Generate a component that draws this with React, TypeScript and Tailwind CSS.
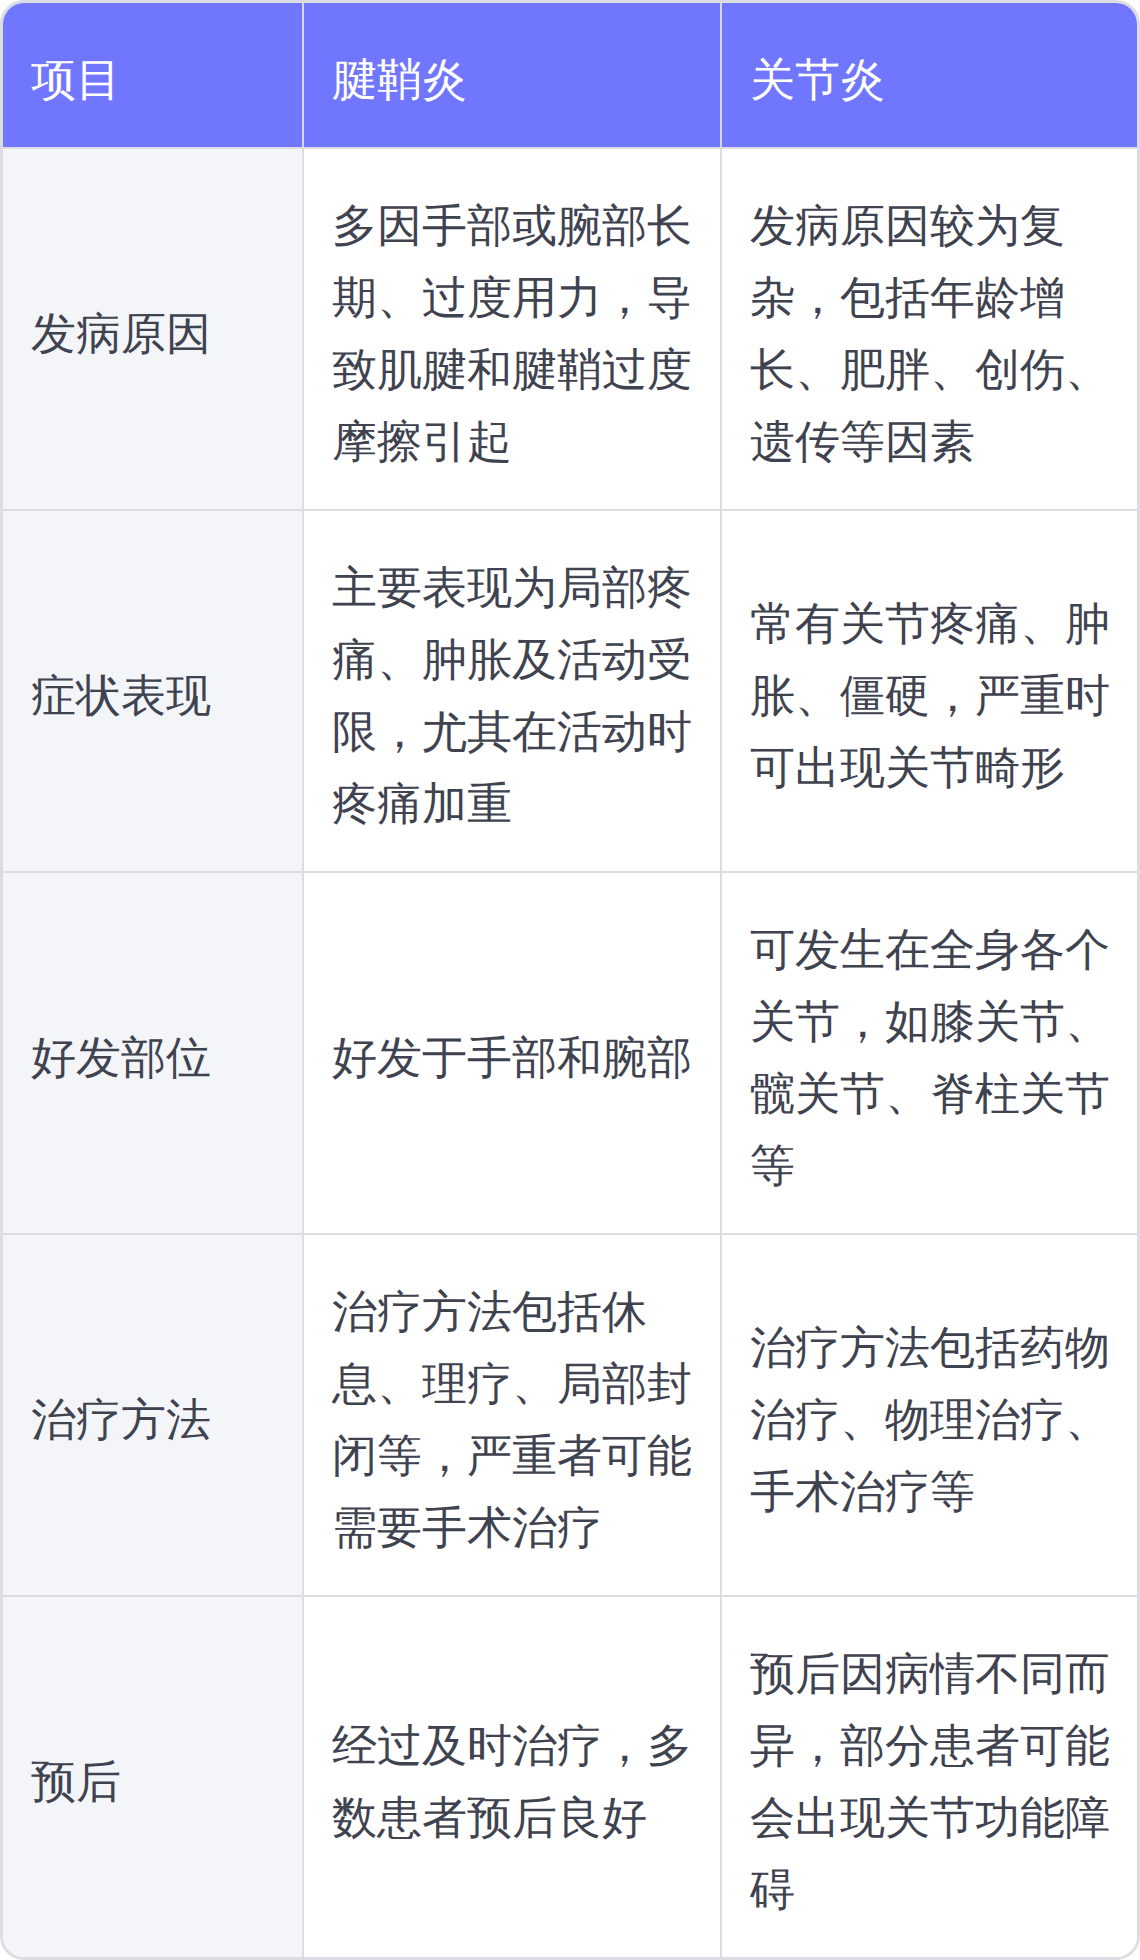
const rows = [
  {
    item: "发病原因",
    tendon: "多因手部或腕部长期、过度用力，导致肌腱和腱鞘过度摩擦引起",
    joint: "发病原因较为复杂，包括年龄增长、肥胖、创伤、遗传等因素",
  },
  {
    item: "症状表现",
    tendon: "主要表现为局部疼痛、肿胀及活动受限，尤其在活动时疼痛加重",
    joint: "常有关节疼痛、肿胀、僵硬，严重时可出现关节畸形",
  },
  {
    item: "好发部位",
    tendon: "好发于手部和腕部",
    joint: "可发生在全身各个关节，如膝关节、髋关节、脊柱关节等",
  },
  {
    item: "治疗方法",
    tendon: "治疗方法包括休息、理疗、局部封闭等，严重者可能需要手术治疗",
    joint: "治疗方法包括药物治疗、物理治疗、手术治疗等",
  },
  {
    item: "预后",
    tendon: "经过及时治疗，多数患者预后良好",
    joint: "预后因病情不同而异，部分患者可能会出现关节功能障碍",
  },
];

const cell = "flex items-center pl-7 pr-[26px] pt-10 pb-8 text-[45px] leading-[72px] font-light";

export default function App() {
  return (
    <div className="w-[1140px] bg-white" style={{ fontFamily: '"Inter", sans-serif' }}>
      <div className="border-[3px] border-[#dcdde3] rounded-[24px] overflow-hidden grid grid-cols-[299px_418px_417px]">
        {/* header */}
        <div className={`${cell} bg-[#7176ff] text-white`}>项目</div>
        <div className={`${cell} bg-[#7176ff] text-white border-l-2 border-[#d6d8e8]`}>腱鞘炎</div>
        <div className={`${cell} bg-[#7176ff] text-white border-l-2 border-[#d6d8e8]`}>关节炎</div>

        {rows.map((r) => (
          <>
            <div key={r.item + "a"} className={`${cell} bg-[#f4f5f9] text-[#3f4350] border-t-2 border-[#dcdde3]`}>
              {r.item}
            </div>
            <div key={r.item + "b"} className={`${cell} bg-white text-[#3f4350] border-t-2 border-l-2 border-[#dcdde3]`}>
              <p>{r.tendon}</p>
            </div>
            <div key={r.item + "c"} className={`${cell} bg-white text-[#3f4350] border-t-2 border-l-2 border-[#dcdde3]`}>
              <p>{r.joint}</p>
            </div>
          </>
        ))}
      </div>
    </div>
  );
}
